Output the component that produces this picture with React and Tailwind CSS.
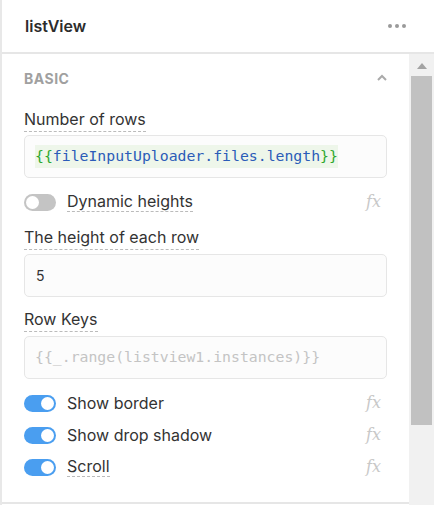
import React from "react";

const Toggle = ({ on }) => (
  <div
    className={`w-8 h-[17px] rounded-full flex items-center px-[2px] shrink-0 ${
      on ? "bg-[#4a9ef0] justify-end" : "bg-[#c4c4c4] justify-start"
    }`}
  >
    <div className="w-[13px] h-[13px] rounded-full bg-white" />
  </div>
);

const Fx = () => (
  <span className="ml-auto mr-[6px] text-[#c8c8c8] italic text-[16px] font-['DejaVu_Serif',serif] leading-none">
    fx
  </span>
);

const Label = ({ children }) => (
  <div className="text-[16px] text-[#333] leading-[20px]">
    <span className="border-b border-dashed border-[#bbb] pb-[2px]">{children}</span>
  </div>
);

const SwitchRow = ({ on, label, dashed }) => (
  <div className="flex items-center h-8">
    <Toggle on={on} />
    <span
      className={`ml-[11px] text-[16px] text-[#333] ${
        dashed ? "border-b border-dashed border-[#bbb] leading-[19px]" : ""
      }`}
    >
      {label}
    </span>
    <Fx />
  </div>
);

const Box = ({ children }) => (
  <div className="h-[43px] rounded-[5px] border border-[#e6e6e6] bg-[#fcfcfc] flex items-center px-[10px] font-['DejaVu_Sans_Mono',monospace] text-[14.8px]">
    {children}
  </div>
);

export default function App() {
  return (
    <div className="w-[434px] h-[505px] bg-white font-['Inter',sans-serif] flex flex-col border-l-2 border-[#e8e8e8] overflow-hidden">
      <div className="h-[54px] shrink-0 flex items-center justify-between pl-[23px] pr-[28px] border-b-2 border-[#e6e6e6]">
        <span className="text-[16px] font-semibold text-[#2c2c2c]">listView</span>
        <div className="flex gap-[3px]">
          <span className="w-[4px] h-[4px] rounded-full bg-[#9a9a9a]" />
          <span className="w-[4px] h-[4px] rounded-full bg-[#9a9a9a]" />
          <span className="w-[4px] h-[4px] rounded-full bg-[#9a9a9a]" />
        </div>
      </div>
      <div className="flex flex-1 min-h-0">
        <div className="flex-1 flex flex-col border-b-2 border-[#e6e6e6] mb-[1px]">
          <div className="pl-[22px] pr-[22px] pt-[13px]">
            <div className="flex items-center justify-between h-[22px]">
              <span className="text-[14px] font-bold text-[#a0a0a0] tracking-[0.5px]">BASIC</span>
              <svg width="12" height="8" viewBox="0 0 12 8" className="mr-[-1px]">
                <path d="M2 6 L6 2 L10 6" fill="none" stroke="#aaa" strokeWidth="2" />
              </svg>
            </div>
            <div className="mt-[20px]">
              <Label>Number of rows</Label>
              <div className="mt-[6px]">
                <Box>
                  <span className="bg-[#eef6ea]">
                    <span className="text-[#2fa82f]">{"{{"}</span>
                    <span className="text-[#2b5cb8]">fileInputUploader.files.length</span>
                    <span className="text-[#2fa82f]">{"}}"}</span>
                  </span>
                </Box>
              </div>
            </div>
            <div className="mt-[8px]">
              <SwitchRow on={false} label="Dynamic heights" dashed />
            </div>
            <div className="mt-[9px]">
              <Label>The height of each row</Label>
              <div className="mt-[7px]">
                <Box>
                  <span className="font-['Inter',sans-serif] text-[14px] text-[#333] pl-[1px]">5</span>
                </Box>
              </div>
            </div>
            <div className="mt-[12px]">
              <Label>Row Keys</Label>
              <div className="mt-[7px]">
                <Box>
                  <span className="text-[#c4c4c4]">{"{{_.range(listview1.instances)}}"}</span>
                </Box>
              </div>
            </div>
            <div className="mt-[8px] flex flex-col">
              <SwitchRow on label="Show border" />
              <SwitchRow on label="Show drop shadow" />
              <SwitchRow on label="Scroll" dashed />
            </div>
          </div>
        </div>
        <div className="w-[25px] bg-[#f1f1f1] flex flex-col items-center shrink-0">
          <svg width="12" height="8" viewBox="0 0 12 8" className="mt-[8px]">
            <path d="M1 7 L6 1 L11 7 Z" fill="#a3a3a3" />
          </svg>
          <div className="w-[21px] h-[349px] bg-[#c1c1c1] mt-[6px]" />
        </div>
      </div>
    </div>
  );
}
